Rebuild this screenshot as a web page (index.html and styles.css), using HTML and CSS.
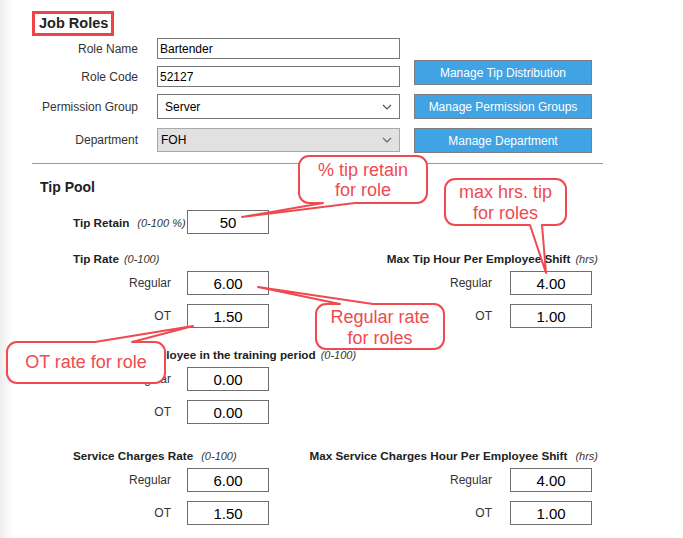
FILE: index.html
```html
<!DOCTYPE html>
<html lang="en">
<head>
<meta charset="utf-8">
<title>Job Roles</title>
<link rel="stylesheet" href="styles.css">
</head>
<body>
<div class="page">
  <h1 class="title">Job Roles</h1>
  <div class="top">
    <div class="fields">
      <div class="field h21"><label>Role Name</label><input class="ctl" type="text" value="Bartender"></div>
      <div class="field h21"><label>Role Code</label><input class="ctl" type="text" value="52127"></div>
      <div class="field h25"><label>Permission Group</label>
        <div class="select-wrap ctl">
          <select class="sel"><option>Server</option></select>
          <svg class="chev" width="10" height="6" viewBox="0 0 10 6"><path d="M1 1 L5 5 L9 1" fill="none" stroke="#555" stroke-width="1.2"/></svg>
        </div>
      </div>
      <div class="field h24"><label>Department</label>
        <div class="select-wrap ctl disabled">
          <select class="sel"><option>FOH</option></select>
          <svg class="chev" width="10" height="6" viewBox="0 0 10 6"><path d="M1 1 L5 5 L9 1" fill="none" stroke="#666" stroke-width="1.2"/></svg>
        </div>
      </div>
    </div>
    <div class="actions">
      <button class="btn">Manage Tip Distribution</button>
      <button class="btn">Manage Permission Groups</button>
      <button class="btn">Manage Department</button>
    </div>
  </div>
  <hr class="sep">
  <h2 class="section-title">Tip Pool</h2>
  <div class="retain">
    <div class="retain-label"><span class="lbl">Tip Retain</span><span class="hint wide">(0-100 %)</span></div>
    <input class="num" type="text" value="50">
  </div>

  <div class="pair p1">
    <div class="group left">
      <div class="ghead"><span class="lbl">Tip Rate</span><span class="hint">(0-100)</span></div>
      <div class="nrow"><span class="nlabel">Regular</span><input class="num" type="text" value="6.00"></div>
      <div class="nrow"><span class="nlabel">OT</span><input class="num" type="text" value="1.50"></div>
    </div>
    <div class="group right">
      <div class="ghead"><span class="lbl">Max Tip Hour Per Employee Shift</span><span class="hint">(hrs)</span></div>
      <div class="nrow"><span class="nlabel">Regular</span><input class="num" type="text" value="4.00"></div>
      <div class="nrow"><span class="nlabel">OT</span><input class="num" type="text" value="1.00"></div>
    </div>
  </div>

  <div class="pair p2">
    <div class="group left">
      <div class="ghead nowrap"><span class="lbl">Tip Rate for Employee in the training period</span><span class="hint">(0-100)</span></div>
      <div class="nrow"><span class="nlabel">Regular</span><input class="num" type="text" value="0.00"></div>
      <div class="nrow"><span class="nlabel">OT</span><input class="num" type="text" value="0.00"></div>
    </div>
  </div>

  <div class="pair p3">
    <div class="group left">
      <div class="ghead"><span class="lbl">Service Charges Rate</span><span class="hint wide">(0-100)</span></div>
      <div class="nrow"><span class="nlabel">Regular</span><input class="num" type="text" value="6.00"></div>
      <div class="nrow"><span class="nlabel">OT</span><input class="num" type="text" value="1.50"></div>
    </div>
    <div class="group right">
      <div class="ghead"><span class="lbl">Max Service Charges Hour Per Employee Shift</span><span class="hint wide">(hrs)</span></div>
      <div class="nrow"><span class="nlabel">Regular</span><input class="num" type="text" value="4.00"></div>
      <div class="nrow"><span class="nlabel">OT</span><input class="num" type="text" value="1.00"></div>
    </div>
  </div>
</div>

<svg class="callouts" width="683" height="538" viewBox="0 0 683 538">
  <g class="bubble">
    <path d="M309 156 H417 A10 10 0 0 1 427 166 V193 A10 10 0 0 1 417 203 H355 L242 217 L323 203 H309 A10 10 0 0 1 299 193 V166 A10 10 0 0 1 309 156 Z"/>
    <text x="363" y="176">% tip retain</text>
    <text x="363" y="196">for role</text>
  </g>
  <g class="bubble">
    <path d="M455 179 H556 A10 10 0 0 1 566 189 V215 A10 10 0 0 1 556 225 H542 L546 273 L530 225 H455 A10 10 0 0 1 445 215 V189 A10 10 0 0 1 455 179 Z"/>
    <text x="505.5" y="198">max hrs. tip</text>
    <text x="505.5" y="219">for roles</text>
  </g>
  <g class="bubble">
    <path d="M326 304 H340 L258 287 L373 304 H434 A10 10 0 0 1 444 314 V339 A10 10 0 0 1 434 349 H326 A10 10 0 0 1 316 339 V314 A10 10 0 0 1 326 304 Z"/>
    <text x="380" y="323">Regular rate</text>
    <text x="380" y="344">for roles</text>
  </g>
  <g class="bubble">
    <path d="M17 342 H95 L193 326 L132 342 H155 A10 10 0 0 1 165 352 V373 A10 10 0 0 1 155 383 H17 A10 10 0 0 1 7 373 V352 A10 10 0 0 1 17 342 Z"/>
    <text x="86" y="368">OT rate for role</text>
  </g>
</svg>
</body>
</html>
```
FILE: styles.css
```css
html, body {
  margin: 0;
  padding: 0;
}

body {
  position: relative;
  width: 683px;
  height: 538px;
  overflow: hidden;
  font-family: "Liberation Sans", Arial, sans-serif;
  background: linear-gradient(to right, #ececec 0px, #f7f7f7 6px, #ffffff 14px);
  color: #333;
}

.page {
  padding: 11px 0 0 32px;
  width: 571px;
}

.title {
  display: inline-block;
  margin: 0;
  border: 3px solid #ef4146;
  padding: 0 3px 0 4px;
  font-size: 14.5px;
  font-weight: bold;
  line-height: 19px;
  color: #222;
}

.top {
  display: flex;
  margin-top: 2px;
}

.fields {
  display: flex;
  flex-direction: column;
}

.field {
  display: flex;
  align-items: center;
}

.field label {
  width: 106px;
  margin-right: 19px;
  text-align: right;
  font-size: 12px;
  color: #333;
}

.ctl {
  box-sizing: border-box;
  width: 243px;
  margin: 0;
  font-family: "Liberation Sans", Arial, sans-serif;
  font-size: 12px;
  color: #000;
  background: #fff;
  border: 1px solid #777;
  outline: none;
}

input.ctl {
  padding: 0 2px;
}

.h21 { margin-bottom: 7px; }
.h21 .ctl { height: 21px; }
.h25 { margin-bottom: 9px; }
.h25 .ctl { height: 25px; }
.h24 .ctl { height: 24px; }

.select-wrap {
  position: relative;
  display: flex;
  align-items: center;
}

.sel {
  appearance: none;
  -webkit-appearance: none;
  border: 0;
  background: transparent;
  width: 100%;
  height: 100%;
  padding: 0 0 0 7px;
  font-family: "Liberation Sans", Arial, sans-serif;
  font-size: 12px;
  color: #000;
  outline: none;
}

.select-wrap.disabled {
  background: #e1e1e1;
  border-color: #a9a9a9;
}

.select-wrap.disabled .sel {
  padding-left: 3px;
}

.chev {
  position: absolute;
  right: 7px;
  top: 50%;
  margin-top: -3px;
}

.actions {
  display: flex;
  flex-direction: column;
  gap: 9px;
  margin-top: 22px;
  margin-left: 14px;
}

.btn {
  box-sizing: border-box;
  width: 178px;
  height: 25px;
  margin: 0;
  padding: 0;
  background: #40a3e3;
  border: 1px solid #7d7d7d;
  color: #fff;
  font-family: "Liberation Sans", Arial, sans-serif;
  font-size: 12px;
}

.sep {
  margin: 10px 0 0;
  border: 0;
  border-top: 1px solid #999;
  height: 0;
  width: 571px;
}

.section-title {
  margin: 15px 0 0 8px;
  font-size: 14px;
  line-height: 16px;
  font-weight: bold;
  color: #222;
}

.lbl {
  font-size: 11.7px;
  font-weight: bold;
  color: #222;
}

.hint {
  margin-left: 5px;
  font-size: 11px;
  font-style: italic;
  color: #333;
}

.hint.wide {
  margin-left: 8px;
}

.retain {
  display: flex;
  align-items: center;
  margin-top: 15px;
  padding-left: 41px;
}

.retain-label {
  width: 114px;
}

.num {
  box-sizing: border-box;
  width: 82px;
  height: 24px;
  margin: 0;
  padding: 0;
  border: 1px solid #6f6f6f;
  text-align: center;
  font-family: "Liberation Sans", Arial, sans-serif;
  font-size: 15px;
  color: #000;
  background: #fff;
  outline: none;
}

.pair {
  display: flex;
}

.p1 { margin-top: 17px; }
.p2 { margin-top: 19px; }
.p3 { margin-top: 24px; }

.group.left {
  width: 227px;
  padding-left: 41px;
}

.group.right {
  flex: 1;
  padding-right: 5px;
}

.ghead {
  line-height: 14px;
  height: 14px;
  white-space: nowrap;
}

.group.right .ghead {
  text-align: right;
}

.nrow {
  display: flex;
  align-items: center;
  margin-top: 9px;
}

.ghead + .nrow {
  margin-top: 6px;
}

.nlabel {
  font-size: 12px;
  color: #333;
}

.group.left .nlabel {
  width: 98px;
  margin-right: 16px;
  text-align: right;
}

.group.right .nrow {
  justify-content: flex-end;
  padding-right: 6px;
}

.group.right .nlabel {
  margin-right: 18px;
}

.callouts {
  position: absolute;
  left: 0;
  top: 0;
  pointer-events: none;
}

.bubble path {
  fill: #fff;
  stroke: #ef4a50;
  stroke-width: 2;
  stroke-linejoin: round;
}

.bubble text {
  fill: #ef4a50;
  font-family: "Liberation Sans", Arial, sans-serif;
  font-size: 18px;
  text-anchor: middle;
}
```
